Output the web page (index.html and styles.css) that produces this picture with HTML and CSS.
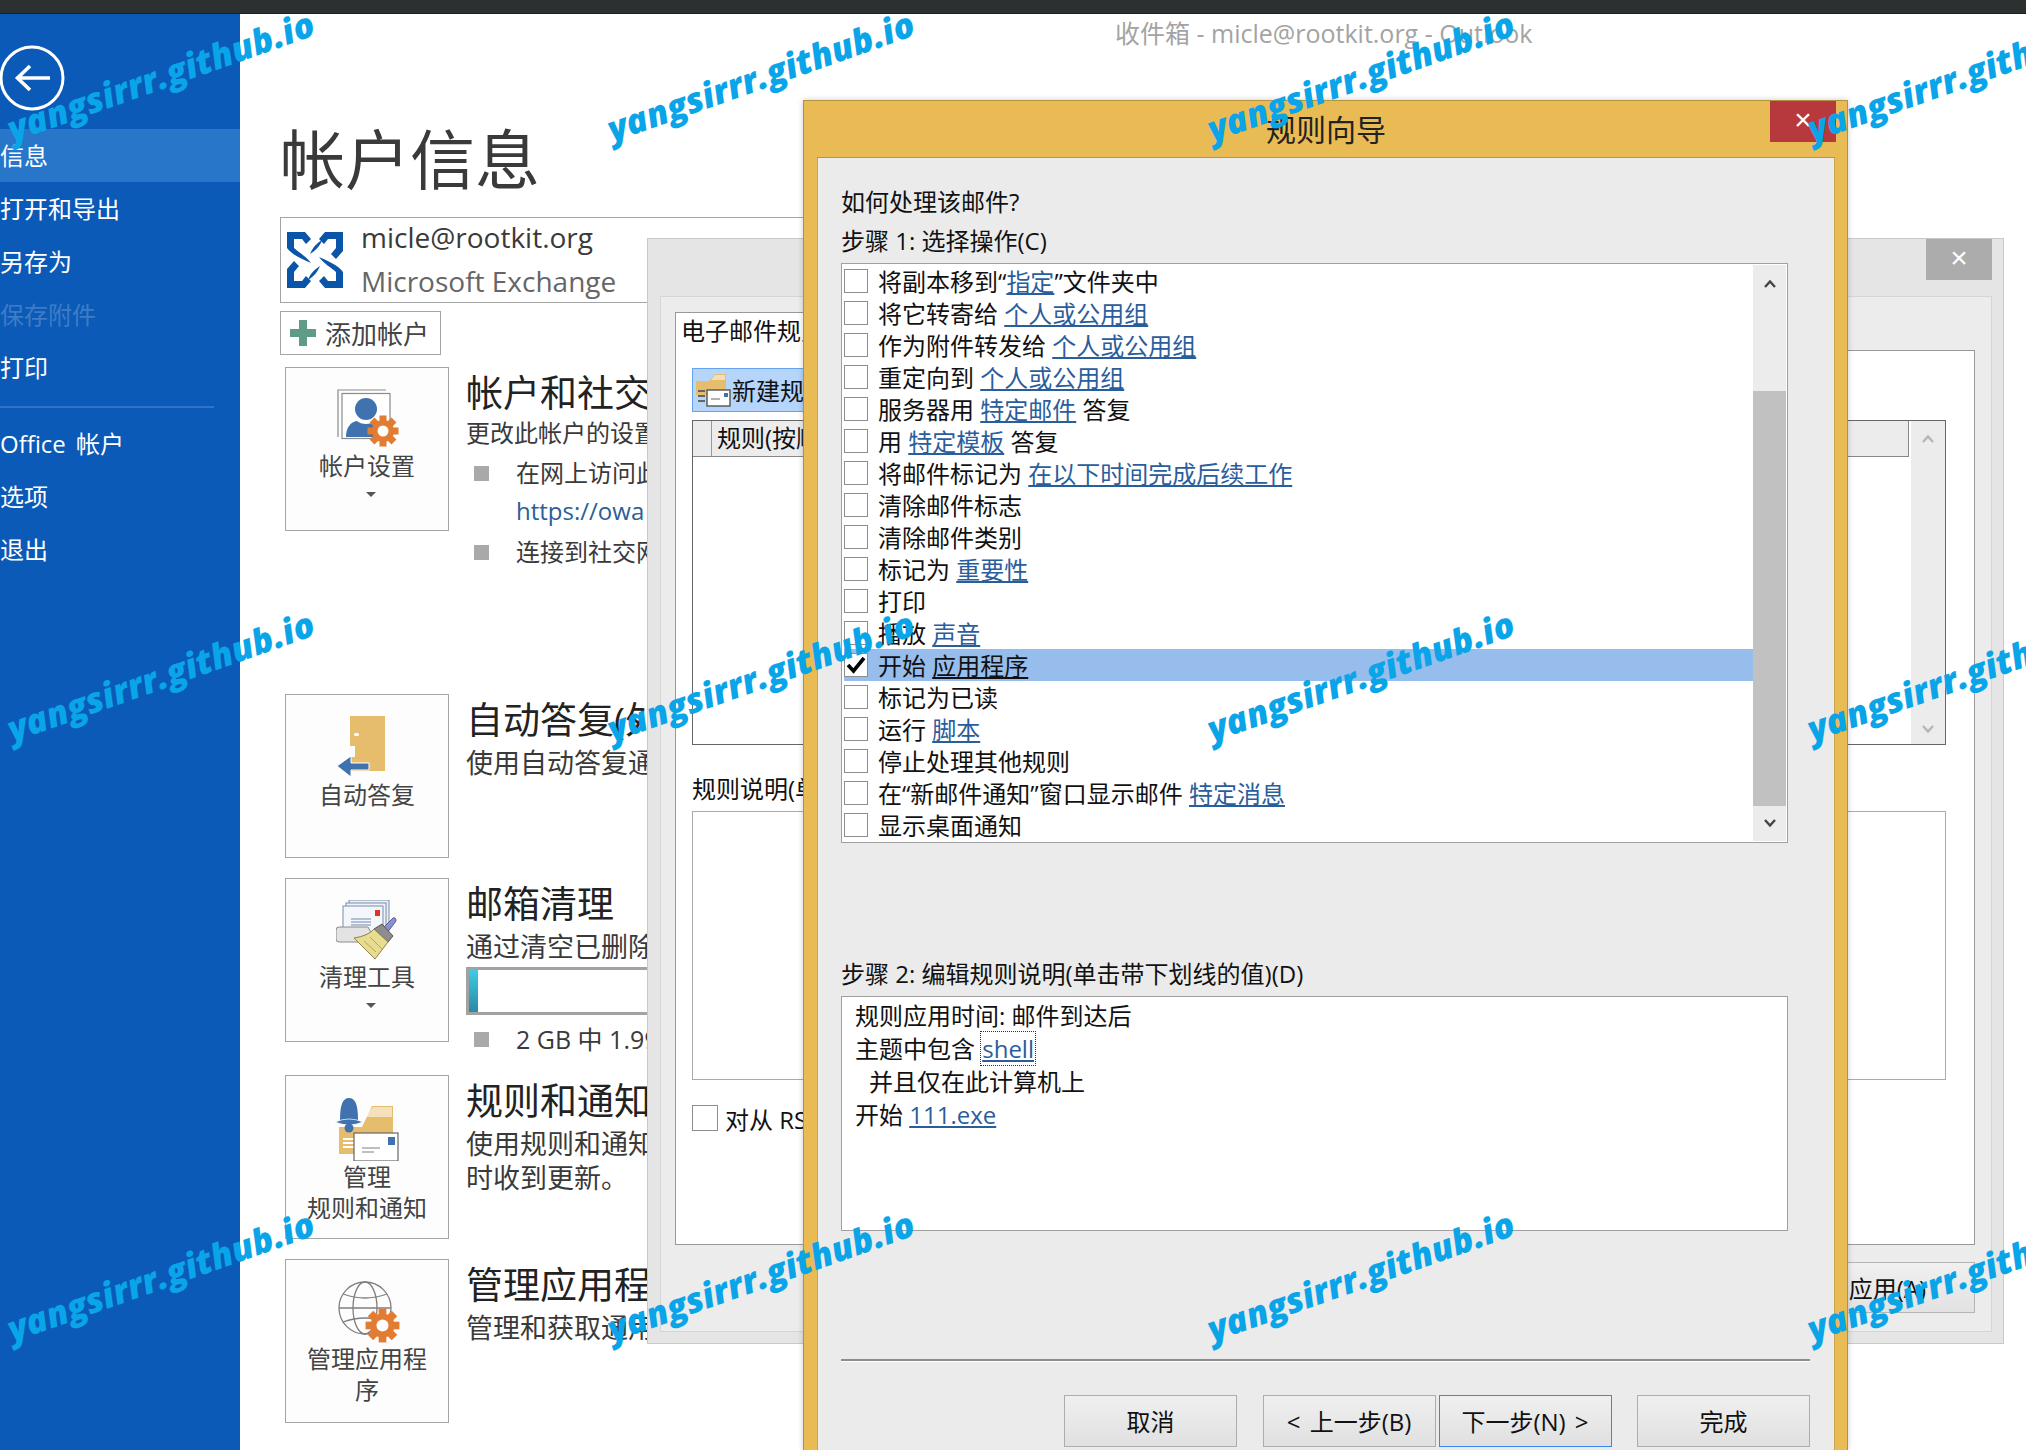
FILE: index.html
```html
<!DOCTYPE html>
<html lang="zh-CN">
<head>
    <meta charset="UTF-8">
    <title>收件箱 - micle@rootkit.org - Outlook</title>
    <link rel="stylesheet" href="styles.css">
</head>
<body>
    <svg class="defs" width="0" height="0">
        <symbol id="gear" viewBox="-16 -16 32 32">
            <g fill="#e27c33">
                <circle r="11"/>
                <rect x="-3.5" y="-15.5" width="7" height="31"/>
                <rect x="-15.5" y="-3.5" width="31" height="7"/>
                <rect x="-3.5" y="-15.5" width="7" height="31" transform="rotate(45)"/>
                <rect x="-15.5" y="-3.5" width="31" height="7" transform="rotate(45)"/>
            </g>
            <circle r="5.5" fill="#fff"/>
        </symbol>
        <symbol id="chev-up" viewBox="0 0 12 10">
            <path d="M1 8 L6 2.5 L11 8" fill="none" stroke="currentColor" stroke-width="2.4"/>
        </symbol>
        <symbol id="chev-down" viewBox="0 0 12 10">
            <path d="M1 2 L6 7.5 L11 2" fill="none" stroke="currentColor" stroke-width="2.4"/>
        </symbol>
    </svg>

    <div class="topbar"></div>
    <div class="app-title">收件箱 - micle@rootkit.org - Outlook</div>

    <div class="backstage">
        <nav class="sidebar">
            <svg class="back-btn" width="66" height="66" viewBox="0 0 66 66">
                <circle cx="32" cy="33" r="31" fill="none" stroke="#fff" stroke-width="3"/>
                <path d="M50 33 H18 M30 21 L17.5 33 L30 45" fill="none" stroke="#fff" stroke-width="3.6"/>
            </svg>
            <ul class="side-menu">
                <li class="active">信息</li>
                <li>打开和导出</li>
                <li>另存为</li>
                <li class="disabled">保存附件</li>
                <li>打印</li>
            </ul>
            <div class="side-divider"></div>
            <ul class="side-menu">
                <li class="side-office">Office 帐户</li>
                <li>选项</li>
                <li>退出</li>
            </ul>
        </nav>

        <main class="content">
            <h1 class="page-title">帐户信息</h1>
            <div class="account-box">
                <svg class="exchange-logo" width="56" height="56" viewBox="0 0 56 56">
                    <g fill="#0a55a8">
                        <path d="M0 0H18L24 7 19 12 15 7H7V16C11 20 19 24 24 31 15 27 5 23 0 16Z"/>
                        <path d="M0 0H18L24 7 19 12 15 7H7V16C11 20 19 24 24 31 15 27 5 23 0 16Z" transform="rotate(180 28 28)"/>
                        <path d="M56 0H38L32 7 37 12 41 7H49V16L44 22 49 27 56 19Z"/>
                        <path d="M56 0H38L32 7 37 12 41 7H49V16L44 22 49 27 56 19Z" transform="rotate(180 28 28)"/>
                        <path d="M23 22C26 15 30 11 35 8 33 14 29 18 23 22Z"/>
                        <path d="M23 22C26 15 30 11 35 8 33 14 29 18 23 22Z" transform="rotate(180 28 28)"/>
                    </g>
                </svg>
                <div class="account-lines">
                    <div class="account-mail">micle@rootkit.org</div>
                    <div class="account-type">Microsoft Exchange</div>
                </div>
            </div>
            <button class="add-account">
                <svg width="26" height="26" viewBox="0 0 26 26"><path fill="#5f9b86" d="M9 0 H17 V9 H26 V17 H17 V26 H9 V17 H0 V9 H9 Z"/></svg>
                <span>添加帐户</span>
            </button>

            <section class="info-row sec-acct">
                <div class="card">
                    <svg class="card-icon icon-right" width="64" height="58" viewBox="0 0 64 58">
                        <path d="M1 48 V1 H49" fill="none" stroke="#8a8a8a" stroke-width="1.2"/>
                        <rect x="5" y="4.5" width="48" height="45" fill="#fff" stroke="#8a8a8a" stroke-width="1.2"/>
                        <circle cx="29" cy="20" r="11" fill="#3f72ae"/>
                        <path d="M9 48 C9 38 14 33 20 32 C24 36 34 36 38 32 L38 48 Z" fill="#3f72ae"/>
                        <use href="#gear" x="30" y="26" width="32" height="32"/>
                    </svg>
                    <span class="card-label label-low">帐户设置</span>
                    <span class="card-caret"></span>
                </div>
                <div class="info-text">
                    <h2>帐户和社交</h2>
                    <p class="info-sub">更改此帐户的设置</p>
                    <div class="bullet bullet-a"><i></i>在网上访问此</div>
                    <a class="owa-link">https://owa</a>
                    <div class="bullet bullet-b"><i></i>连接到社交网</div>
                </div>
            </section>

            <section class="info-row sec-auto">
                <div class="card">
                    <svg class="card-icon icon-left" width="50" height="62" viewBox="0 0 50 62">
                        <path d="M14 0 H49 V55 H14 V41 H19 V30 H14 Z" fill="#e6bd6c"/>
                        <rect x="18" y="17" width="5" height="3" rx="1.5" fill="#fff"/>
                        <path d="M1 50 L15 40 V47 H33 V54 H15 V61 Z" fill="#3f72ae" stroke="#fff" stroke-width="1"/>
                    </svg>
                    <span class="card-label">自动答复</span>
                </div>
                <div class="info-text">
                    <h2>自动答复(外</h2>
                    <p class="info-sub sub-big">使用自动答复通</p>
                </div>
            </section>

            <section class="info-row sec-clean">
                <div class="card">
                    <svg class="card-icon" width="62" height="60" viewBox="0 0 62 60">
                        <rect x="13" y="0" width="40" height="28" fill="#e7eef7" stroke="#7a8ea8"/>
                        <rect x="10" y="3" width="40" height="28" fill="#eef3fa" stroke="#7a8ea8"/>
                        <rect x="7" y="6" width="40" height="30" fill="#f3f7fc" stroke="#7a8ea8"/>
                        <rect x="39" y="10" width="5" height="6" fill="#e8301c"/>
                        <path d="M15 19 H35 M15 22 H35 M15 25 H35" stroke="#6d87ad" stroke-width="1"/>
                        <path d="M3 27 H32 L40 42 H3 Q0 42 0 39 V30 Q0 27 3 27 Z" fill="#e3e3e3" stroke="#8a8a8a"/>
                        <path d="M46 29 L57 18 Q60 17 60 21 L51 33 Z" fill="#8c8fd0" stroke="#555a90"/>
                        <path d="M38 29 L46 24 L57 36 L52 42 Z" fill="#8d8d8d" stroke="#555"/>
                        <path d="M18 38 Q32 36 38 29 L52 42 L39 59 Z" fill="#e8dc91" stroke="#8c8448"/>
                        <path d="M28 41 L40 52 M34 37 L46 49" stroke="#b7a94f" stroke-width="1"/>
                    </svg>
                    <span class="card-label">清理工具</span>
                    <span class="card-caret"></span>
                </div>
                <div class="info-text">
                    <h2>邮箱清理</h2>
                    <p class="info-sub sub-big">通过清空已删除</p>
                    <div class="quota-bar"><span class="quota-fill" style="width: 9px"></span></div>
                    <div class="bullet bullet-c"><i></i><span class="quota-text">2 GB 中 1.99</span></div>
                </div>
            </section>

            <section class="info-row sec-rules">
                <div class="card">
                    <svg class="card-icon" width="66" height="64" viewBox="0 0 66 64">
                        <path d="M5 30 H28 L38 9 H59 V57 H5 Z" fill="#e6bd6c"/>
                        <path d="M30 20 L39 10 H58 V20 Z" fill="#fff" opacity=".55"/>
                        <path d="M6 23 C6 7 9 1 15 1 C21 1 24 7 24 23 Z" fill="#3f72ae"/>
                        <path d="M1 25 Q15 19 29 25 Q15 31 1 25 Z" fill="#3f72ae" stroke="#fff" stroke-width=".7"/>
                        <circle cx="15" cy="31" r="4.5" fill="#3f72ae"/>
                        <path d="M9 42 H22 M9 46 H22 M9 50 H22" stroke="#fff" stroke-width="2"/>
                        <rect x="20" y="36" width="44" height="28" fill="#fff" stroke="#666" stroke-width="1.2"/>
                        <rect x="54" y="40" width="7" height="8" fill="#3f72ae"/>
                        <path d="M28 51 H46 M28 55 H40" stroke="#aaa" stroke-width="1.6"/>
                    </svg>
                    <span class="card-label label-tight">管理<br>规则和通知</span>
                </div>
                <div class="info-text">
                    <h2>规则和通知</h2>
                    <p class="info-sub sub-big">使用规则和通知</p>
                    <p class="info-sub sub-big">时收到更新。</p>
                </div>
            </section>

            <section class="info-row">
                <div class="card">
                    <svg class="card-icon icon-right" width="62" height="62" viewBox="0 0 62 62">
                        <g fill="none" stroke="#7f7f7f" stroke-width="1.3">
                            <circle cx="27" cy="27" r="26"/>
                            <ellipse cx="27" cy="27" rx="12" ry="26"/>
                            <path d="M1 27 H53 M5 13 Q27 21 49 13 M5 41 Q27 33 49 41"/>
                        </g>
                        <use href="#gear" x="27" y="27" width="35" height="35"/>
                    </svg>
                    <span class="card-label label-tight">管理应用程<br>序</span>
                </div>
                <div class="info-text">
                    <h2>管理应用程</h2>
                    <p class="info-sub sub-big">管理和获取通用</p>
                </div>
            </section>
        </main>
    </div>

    <!-- 电子邮件规则和通知 -->
    <div class="rules-window">
        <div class="win-close gray-close">×</div>
        <div class="rules-inner">
            <div class="rules-tab">电子邮件规则</div>
            <div class="rules-panel">
                <div class="new-rule">
                    <svg width="36" height="36" viewBox="0 0 36 36">
                        <path d="M1 10 H14 L20 3 H31 V24 H1 Z" fill="#e6bd6c"/>
                        <path d="M20 4 H30 V9 H16 Z" fill="#fff" opacity=".5"/>
                        <path d="M3 20 H10 M3 25 H10 M3 30 H10" stroke="#666" stroke-width="2.2"/>
                        <rect x="12" y="19" width="23" height="16" fill="#fff" stroke="#555" stroke-width="1.4"/>
                        <rect x="29" y="22" width="4" height="4" fill="#3f72ae"/>
                        <path d="M16 28 H25" stroke="#999" stroke-width="1.5"/>
                    </svg>
                    <span>新建规则</span>
                </div>
                <div class="rule-list">
                    <div class="rule-main">
                        <div class="rule-head"><span class="rule-col-blank"></span><span>规则(按顺序</span></div>
                    </div>
                    <div class="rule-scroll">
                        <svg width="12" height="10"><use href="#chev-up"/></svg>
                        <svg width="12" height="10"><use href="#chev-down"/></svg>
                    </div>
                </div>
                <div class="rule-desc-label">规则说明(单</div>
                <div class="rule-desc"></div>
                <div class="rss-row"><span class="check rss-check"></span>对从 RS</div>
            </div>
            <div class="apply-row"><button class="apply-btn">应用(A)</button></div>
        </div>
    </div>

    <!-- 规则向导 -->
    <div class="wizard">
        <div class="wizard-title">规则向导<div class="win-close red-close">×</div></div>
        <div class="wizard-body">
            <p class="wiz-line">如何处理该邮件?</p>
            <p class="wiz-line wiz-step1">步骤 1: 选择操作(C)</p>
            <div class="action-box">
                <ul class="action-list">
                    <li><span class="check"></span>将副本移到“<a>指定</a>”文件夹中</li>
                    <li><span class="check"></span>将它转寄给 <a>个人或公用组</a></li>
                    <li><span class="check"></span>作为附件转发给 <a>个人或公用组</a></li>
                    <li><span class="check"></span>重定向到 <a>个人或公用组</a></li>
                    <li><span class="check"></span>服务器用 <a>特定邮件</a> 答复</li>
                    <li><span class="check"></span>用 <a>特定模板</a> 答复</li>
                    <li><span class="check"></span>将邮件标记为 <a>在以下时间完成后续工作</a></li>
                    <li><span class="check"></span>清除邮件标志</li>
                    <li><span class="check"></span>清除邮件类别</li>
                    <li><span class="check"></span>标记为 <a>重要性</a></li>
                    <li><span class="check"></span>打印</li>
                    <li><span class="check"></span>播放 <a>声音</a></li>
                    <li class="selected">
                        <span class="check">
                            <svg width="22" height="22" viewBox="0 0 22 22"><path d="M3 11 L8.5 17 L19 4" fill="none" stroke="#000" stroke-width="3.6"/></svg>
                        </span>开始 <a>应用程序</a>
                    </li>
                    <li><span class="check"></span>标记为已读</li>
                    <li><span class="check"></span>运行 <a>脚本</a></li>
                    <li><span class="check"></span>停止处理其他规则</li>
                    <li><span class="check"></span>在“新邮件通知”窗口显示邮件 <a>特定消息</a></li>
                    <li><span class="check"></span>显示桌面通知</li>
                </ul>
                <div class="action-scroll">
                    <svg class="scroll-up" width="12" height="10"><use href="#chev-up"/></svg>
                    <div class="scroll-thumb"></div>
                    <svg class="scroll-down" width="12" height="10"><use href="#chev-down"/></svg>
                </div>
            </div>
            <p class="wiz-line wiz-step2">步骤 2: 编辑规则说明(单击带下划线的值)(D)</p>
            <div class="summary-box">
                <div>规则应用时间: 邮件到达后</div>
                <div>主题中包含 <a class="focused">shell</a></div>
                <div class="summary-indent">并且仅在此计算机上</div>
                <div>开始 <a>111.exe</a></div>
            </div>
            <div class="wiz-sep"></div>
            <div class="wiz-buttons">
                <button class="wiz-btn">取消</button>
                <div class="wiz-pair">
                    <button class="wiz-btn">&lt; 上一步(B)</button>
                    <button class="wiz-btn primary">下一步(N) &gt;</button>
                </div>
                <button class="wiz-btn">完成</button>
            </div>
        </div>
    </div>

    <div class="watermarks">
        <span>yangsirrr.github.io</span><span>yangsirrr.github.io</span><span>yangsirrr.github.io</span><span>yangsirrr.github.io</span>
        <span>yangsirrr.github.io</span><span>yangsirrr.github.io</span><span>yangsirrr.github.io</span><span>yangsirrr.github.io</span>
        <span>yangsirrr.github.io</span><span>yangsirrr.github.io</span><span>yangsirrr.github.io</span><span>yangsirrr.github.io</span>
    </div>
</body>
</html>
```

FILE: styles.css
```css
* {
    box-sizing: border-box;
}
html, body {
    height: 100%;
}
body {
    margin: 0;
    background-color: #fff;
    color: #111;
    font-family: "Open Sans", "Noto Sans CJK SC", sans-serif;
    font-size: 24px;
    overflow: hidden;
    position: relative;
}
ul {
    list-style: none;
    margin: 0;
    padding: 0;
}
p, h1, h2 {
    margin: 0;
    font-weight: 400;
}
button {
    font: inherit;
    color: inherit;
}
.defs {
    position: absolute;
}

/* top */
.topbar {
    height: 14px;
    background-color: #2d3030;
    border-bottom: 1px solid #1c1e1e;
}
.app-title {
    position: absolute;
    top: 14px;
    left: 1115px;
    font-size: 25px;
    line-height: 38px;
    color: #a3a3a3;
    white-space: nowrap;
}

/* backstage */
.backstage {
    display: flex;
    height: calc(100% - 14px);
}
.sidebar {
    width: 240px;
    flex: none;
    background-color: #0b5ab7;
    color: #fff;
    padding-top: 31px;
}
.back-btn {
    display: block;
}
.side-menu {
    margin-top: 18px;
}
.side-divider + .side-menu {
    margin-top: 9px;
}
.side-menu li {
    height: 53px;
    line-height: 53px;
    white-space: nowrap;
}
.side-menu .active {
    background-color: #2776ca;
}
.side-menu .disabled {
    color: #3f7cc6;
}
.side-office {
    word-spacing: 4px;
}
.side-divider {
    width: 214px;
    height: 2px;
    margin-top: 12px;
    background-color: #2f74c6;
}

.content {
    flex: 1;
    padding: 100px 0 0 40px;
    color: #3a3a3a;
}
.page-title {
    font-size: 65px;
    line-height: 90px;
    margin-bottom: 13px;
}
.account-box {
    display: flex;
    align-items: center;
    gap: 18px;
    width: 530px;
    height: 86px;
    padding-left: 6px;
    border: 1px solid #a5a5a5;
    background-color: #fff;
}
.account-lines {
    display: flex;
    flex-direction: column;
    gap: 4px;
    margin-top: -2px;
    white-space: nowrap;
}
.account-mail {
    font-size: 28px;
    line-height: 40px;
}
.account-type {
    font-size: 28px;
    line-height: 40px;
    color: #666;
}
.add-account {
    display: flex;
    align-items: center;
    gap: 9px;
    width: 161px;
    height: 44px;
    margin: 8px 0 12px;
    padding: 0 0 0 9px;
    background-color: #fff;
    border: 1px solid #a5a5a5;
    color: #444;
    font-size: 26px;
    white-space: nowrap;
}

.info-row {
    display: flex;
    gap: 17px;
    margin-left: 5px;
    margin-bottom: 20px;
}
.sec-acct {
    margin-bottom: 126px;
}
.sec-auto {
    margin-bottom: 20px;
}
.sec-clean {
    margin-bottom: 20px;
}
.card {
    width: 164px;
    height: 164px;
    flex: none;
    display: flex;
    flex-direction: column;
    align-items: center;
    border: 1px solid #a5a5a5;
    background-color: #fdfdfd;
    color: #444;
    text-align: center;
}
.card-icon {
    display: block;
    flex: none;
    margin-top: 21px;
}
.icon-right {
    margin-left: 4px;
}
.icon-left {
    margin-right: 12px;
}
.card-label {
    font-size: 24px;
    line-height: 31px;
    margin-top: 1px;
    white-space: nowrap;
}
.label-low {
    margin-top: 3px;
}
.label-tight {
    margin-top: 0;
}
.card-caret {
    width: 0;
    height: 0;
    margin-top: 11px;
    margin-left: 8px;
    border: 5px solid transparent;
    border-top: 5px solid #555;
    border-bottom: 0;
}
.info-text {
    white-space: nowrap;
}
.info-text h2 {
    margin-top: 1px;
    font-size: 37px;
    line-height: 50px;
    color: #222;
}
.info-sub {
    margin-top: -2px;
    line-height: 34px;
}
.sub-big {
    margin-top: 1px;
    font-size: 27px;
}
.info-sub + .info-sub {
    margin-top: 0;
}
.bullet {
    display: flex;
    align-items: center;
    line-height: 32px;
}
.bullet i {
    width: 15px;
    height: 15px;
    margin: 0 27px 0 8px;
    background-color: #a9a9a9;
}
.bullet-a {
    margin-top: 7px;
}
.bullet-b {
    margin-top: 9px;
}
.bullet-c {
    margin-top: 8px;
}
.owa-link {
    display: block;
    margin: 6px 0 0 50px;
    line-height: 32px;
    color: #2a6099;
}
.quota-text {
    font-size: 25px;
}
.quota-bar {
    width: 300px;
    height: 48px;
    margin-top: 3px;
    border: 3px solid #a2a2a2;
    background-color: #fff;
}
.quota-fill {
    display: block;
    height: 100%;
    background: linear-gradient(#3fcbe4, #2a8aa6);
}

/* windows */
.win-close {
    position: absolute;
    width: 66px;
    height: 41px;
    line-height: 38px;
    text-align: center;
    color: #fff;
    font-family: "Liberation Sans", sans-serif;
    font-size: 30px;
}
.rules-window {
    position: absolute;
    left: 647px;
    top: 238px;
    width: 1357px;
    height: 1106px;
    padding: 57px 11px 0 12px;
    background-color: #e5e5e5;
    border: 1px solid #c9c9c9;
}
.gray-close {
    top: 0;
    right: 11px;
    background-color: #acacac;
}
.rules-inner {
    height: 1036px;
    padding: 15px 16px 0 14px;
    background-color: #ececec;
    border: 1px solid #d5d5d5;
}
.rules-tab {
    width: 170px;
    height: 39px;
    line-height: 36px;
    padding-left: 5px;
    margin-bottom: -1px;
    position: relative;
    background-color: #fff;
    border: 1px solid #999;
    border-bottom: 0;
    white-space: nowrap;
    overflow: hidden;
}
.rules-panel {
    height: 895px;
    padding: 17px 28px 0 16px;
    background-color: #fff;
    border: 1px solid #999;
}
.new-rule {
    display: flex;
    align-items: center;
    gap: 1px;
    width: 180px;
    height: 44px;
    padding: 0 0 2px 2px;
    background-color: #b5d5fb;
    border: 1px solid #65a2ee;
    white-space: nowrap;
}
.rule-list {
    display: flex;
    height: 325px;
    margin-top: 8px;
    border: 1px solid #666;
}
.rule-main {
    flex: 1;
}
.rule-head {
    display: flex;
    height: 36px;
    line-height: 33px;
    background-color: #ececec;
    border-right: 1px solid #888;
    border-bottom: 1px solid #888;
    white-space: nowrap;
}
.rule-col-blank {
    width: 19px;
    margin-right: 5px;
    border-right: 1px solid #999;
}
.rule-scroll {
    width: 34px;
    margin-left: 2px;
    display: flex;
    flex-direction: column;
    align-items: center;
    justify-content: space-between;
    padding: 13px 0 10px;
    background-color: #ececec;
    color: #b5b5b5;
}
.rule-desc-label {
    margin-top: 28px;
    line-height: 32px;
    white-space: nowrap;
}
.rule-desc {
    height: 269px;
    margin-top: 6px;
    border: 1px solid #aaa;
}
.rss-row {
    display: flex;
    align-items: center;
    gap: 7px;
    margin-top: 25px;
    height: 26px;
    white-space: nowrap;
}
.check {
    width: 24px;
    height: 24px;
    flex: none;
    display: flex;
    align-items: center;
    justify-content: center;
    background-color: #fff;
    border: 1px solid #8e8e8e;
}
.rss-check {
    width: 26px;
    height: 26px;
}
.apply-row {
    display: flex;
    justify-content: flex-end;
    margin-top: 17px;
}
.apply-btn {
    width: 300px;
    height: 51px;
    padding: 0 48px 0 0;
    text-align: right;
    background: linear-gradient(#f0f0f0, #e2e2e2);
    border: 1px solid #b5b5b5;
}

.wizard {
    position: absolute;
    left: 803px;
    top: 100px;
    width: 1045px;
    height: 1350px;
    padding: 0 12px 0 13px;
    background-color: #e9bb55;
    border: 1px solid #b2913f;
    border-bottom: 0;
    box-shadow: 0 0 6px rgba(0, 0, 0, 0.2);
}
.wizard-title {
    height: 56px;
    line-height: 57px;
    text-align: center;
    font-size: 30px;
    color: #222;
}
.red-close {
    top: 0;
    right: 11px;
    background-color: #b8393d;
}
.wizard-body {
    height: 1293px;
    padding: 28px 24px 0 23px;
    background-color: #ebebeb;
    border-top: 1px solid #b8963f;
    border-left: 1px solid #c9a44c;
    border-right: 1px solid #c9a44c;
}
.wiz-line {
    line-height: 32px;
    white-space: nowrap;
}
.wiz-step1 {
    margin-top: 7px;
}
.action-box {
    display: flex;
    width: 947px;
    height: 580px;
    margin-top: 6px;
    padding: 1px 1px 1px 2px;
    background-color: #fff;
    border: 1px solid #a0a0a0;
}
.action-list {
    flex: 1;
}
.action-list li {
    display: flex;
    align-items: center;
    height: 32px;
    padding-bottom: 2px;
    white-space: pre;
}
.action-list .selected {
    background-color: #96bdec;
}
.action-list a, .summary-box a {
    color: #2a5d9c;
    text-decoration: underline;
    text-underline-offset: 2px;
}
.action-list .check {
    margin: 2px 10px 0 0;
}
.action-list .selected a {
    color: #111;
}
.action-scroll {
    width: 33px;
    position: relative;
    display: flex;
    flex-direction: column;
    align-items: center;
    background-color: #ececec;
    color: #444;
}
.scroll-up {
    margin-top: 14px;
}
.scroll-thumb {
    width: 100%;
    height: 415px;
    margin-top: 102px;
    background-color: #c1c1c1;
}
.scroll-down {
    margin-top: 12px;
}
.wiz-step2 {
    margin-top: 115px;
}
.summary-box {
    width: 947px;
    height: 235px;
    margin-top: 6px;
    padding: 2px 13px;
    background-color: #fff;
    border: 1px solid #a0a0a0;
    line-height: 33px;
    white-space: nowrap;
}
.summary-box .focused {
    outline: 1px dotted #333;
    padding: 0 1px;
}
.summary-indent {
    margin-left: 14px;
}
.wiz-sep {
    height: 3px;
    margin-top: 128px;
    background-color: #8d8d8d;
    border-bottom: 1px solid #fff;
}
.wiz-buttons {
    display: flex;
    justify-content: space-between;
    width: 746px;
    margin: 33px 0 0 auto;
}
.wiz-pair {
    display: flex;
    gap: 3px;
}
.wiz-btn {
    width: 173px;
    height: 52px;
    padding: 0 0 1px;
    background: linear-gradient(#f0f0f0, #e0e0e0);
    border: 1px solid #adadad;
    color: #111;
    white-space: nowrap;
    word-spacing: 3px;
}
.wiz-btn.primary {
    border-color: #3a86f0;
}

/* watermark tiles */
.watermarks {
    position: absolute;
    top: 0;
    left: 0;
    width: 100%;
    height: 100%;
    overflow: hidden;
    display: grid;
    grid-template-columns: repeat(4, 600px);
    grid-auto-rows: 600px;
    pointer-events: none;
}
.watermarks span {
    justify-self: start;
    align-self: start;
    margin: 111px 0 0 14px;
    color: #0aa5e8;
    font-family: "Open Sans", sans-serif;
    font-size: 35px;
    font-style: italic;
    font-weight: 800;
    line-height: 1;
    white-space: nowrap;
    transform: rotate(-19.5deg);
    transform-origin: 0 100%;
}
```
